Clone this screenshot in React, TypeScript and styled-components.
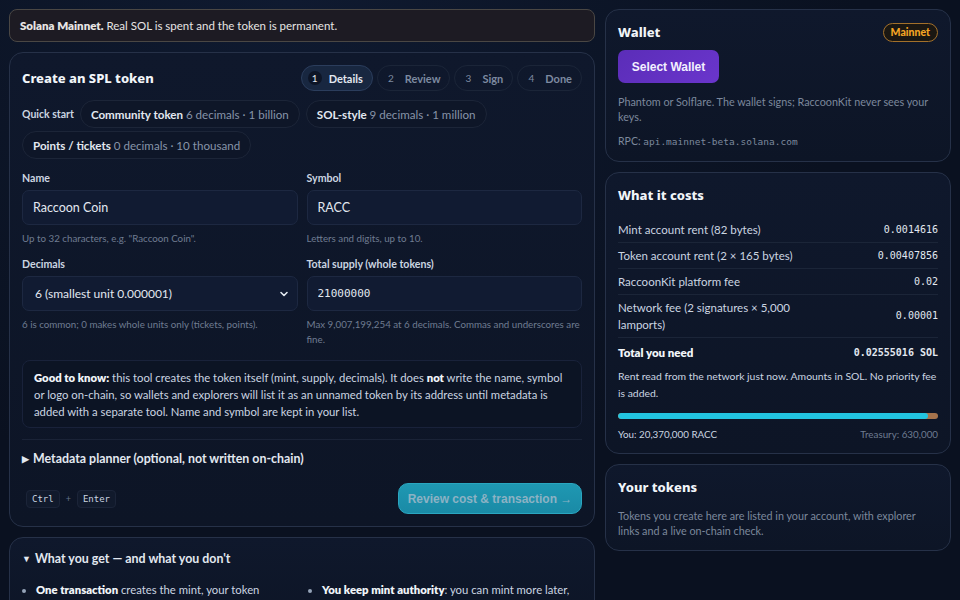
import React from 'react'
import styled, { createGlobalStyle } from 'styled-components'

const GlobalStyle = createGlobalStyle`
	html, body {
		margin: 0;
		padding: 0;
		background: #0a1120;
	}
	body {
		font-family: Lato, 'Noto Sans', sans-serif;
		color: #e2e8f0;
		background: radial-gradient(ellipse at 30% 0%, #0f1a30 0%, #0a1120 60%) fixed;
		min-height: 100vh;
	}
	* { box-sizing: border-box; }
`

const steps = [
	{ n: 1, label: 'Details' },
	{ n: 2, label: 'Review' },
	{ n: 3, label: 'Sign' },
	{ n: 4, label: 'Done' },
]

const presets = [
	{ name: 'Community token', detail: '6 decimals · 1 billion' },
	{ name: 'SOL-style', detail: '9 decimals · 1 million' },
	{ name: 'Points / tickets', detail: '0 decimals · 10 thousand' },
]

const costs = [
	{ label: 'Mint account rent (82 bytes)', value: '0.0014616' },
	{ label: 'Token account rent (2 × 165 bytes)', value: '0.00407856' },
	{ label: 'RaccoonKit platform fee', value: '0.02' },
	{ label: 'Network fee (2 signatures × 5,000 lamports)', value: '0.00001' },
]

const youShare = 20370000
const treasuryShare = 630000

const App: React.FC = () => {
	const pct = (youShare / (youShare + treasuryShare)) * 100
	return (
		<>
			<GlobalStyle />
			<Page>
				<MainCol>
					<Banner>
						<b>Solana Mainnet.</b> Real SOL is spent and the token is permanent.
					</Banner>

					<Card>
						<CardHead>
							<Title>Create an SPL token</Title>
							<Steps>
								{steps.map((s) => (
									<Step key={s.n} $active={s.n === 1}>
										<StepNum $active={s.n === 1}>{s.n}</StepNum>
										{s.label}
									</Step>
								))}
							</Steps>
						</CardHead>

						<Presets>
							<PresetLabel>Quick start</PresetLabel>
							{presets.map((p) => (
								<Preset key={p.name}>
									{p.name} <Muted>{p.detail}</Muted>
								</Preset>
							))}
						</Presets>

						<FormGrid>
							<Field>
								<Label>Name</Label>
								<Input defaultValue="Raccoon Coin" />
								<Hint>Up to 32 characters, e.g. "Raccoon Coin".</Hint>
							</Field>
							<Field>
								<Label>Symbol</Label>
								<Input defaultValue="RACC" />
								<Hint>Letters and digits, up to 10.</Hint>
							</Field>
							<Field>
								<Label>Decimals</Label>
								<SelectBox>
									6 (smallest unit 0.000001)
									<svg width="10" height="10" viewBox="0 0 10 10">
										<path d="M2 3.5 L5 6.5 L8 3.5" fill="none" stroke="#e2e8f0" strokeWidth="1.6" strokeLinecap="round" strokeLinejoin="round" />
									</svg>
								</SelectBox>
								<Hint>6 is common; 0 makes whole units only (tickets, points).</Hint>
							</Field>
							<Field>
								<Label>Total supply (whole tokens)</Label>
								<Input $mono defaultValue="21000000" />
								<Hint>Max 9,007,199,254 at 6 decimals. Commas and underscores are fine.</Hint>
							</Field>
						</FormGrid>

						<InfoBox>
							<b>Good to know:</b> this tool creates the token itself (mint, supply, decimals). It does <b>not</b> write
							the name, symbol or logo on-chain, so wallets and explorers will list it as an unnamed token by its
							address until metadata is added with a separate tool. Name and symbol are kept in your list.
						</InfoBox>

						<Disclosure>
							<Caret>▶</Caret> Metadata planner (optional, not written on-chain)
						</Disclosure>

						<Footer>
							<Keys>
								<Kbd>Ctrl</Kbd>
								<Plus>+</Plus>
								<Kbd>Enter</Kbd>
							</Keys>
							<PrimaryButton disabled>Review cost &amp; transaction →</PrimaryButton>
						</Footer>
					</Card>

					<Card>
						<SectionSummary>
							<Caret>▼</Caret> What you get — and what you don't
						</SectionSummary>
						<Bullets>
							<li>
								<b>One transaction</b> creates the mint, your token account and mints the full supply to
								your wallet.
							</li>
							<li>
								<b>You keep mint authority</b>: you can mint more later, or revoke it to fix the supply for
								good.
							</li>
						</Bullets>
					</Card>
				</MainCol>

				<SideCol>
					<SideCard>
						<SideHead>
							<Title>Wallet</Title>
							<Badge>Mainnet</Badge>
						</SideHead>
						<WalletButton>Select Wallet</WalletButton>
						<Note>Phantom or Solflare. The wallet signs; RaccoonKit never sees your keys.</Note>
						<Rpc>
							RPC: <code>api.mainnet-beta.solana.com</code>
						</Rpc>
					</SideCard>

					<SideCard>
						<Title>What it costs</Title>
						<CostList>
							{costs.map((c) => (
								<CostRow key={c.label}>
									<span>{c.label}</span>
									<Amount>{c.value}</Amount>
								</CostRow>
							))}
							<CostRow $total>
								<span>Total you need</span>
								<Amount $total>0.02555016 SOL</Amount>
							</CostRow>
						</CostList>
						<CostNote>Rent read from the network just now. Amounts in SOL. No priority fee is added.</CostNote>
						<Bar>
							<BarFill style={{ width: `${pct}%` }} />
						</Bar>
						<BarLegend>
							<span>You: 20,370,000 RACC</span>
							<LegendMuted>Treasury: 630,000</LegendMuted>
						</BarLegend>
					</SideCard>

					<SideCard>
						<Title>Your tokens</Title>
						<Note>
							Tokens you create here are listed in your account, with explorer links and a live on-chain
							check.
						</Note>
					</SideCard>
				</SideCol>
			</Page>
		</>
	)
}

const Page = styled.div`
	display: grid;
	grid-template-columns: 586px 346px;
	gap: 10px;
	padding: 9px;
	align-items: start;
`

const MainCol = styled.div`
	display: flex;
	flex-direction: column;
	gap: 10px;
`

const SideCol = styled(MainCol)``

const Banner = styled.div`
	background: #1d1b23;
	border: 1px solid #4a4744;
	border-radius: 8px;
	padding: 8px 10px;
	font-size: 11.5px;
	line-height: 15px;
	color: #e7e5e4;

	b {
		font-weight: 800;
	}
`

const Card = styled.section`
	background: linear-gradient(180deg, #0f182c 0%, #0d1526 100%);
	border: 1px solid #263148;
	border-radius: 14px;
	padding: 12px;
`

const SideCard = styled(Card)`
	padding-top: 13px;
`

const CardHead = styled.div`
	display: flex;
	align-items: center;
	justify-content: space-between;
`

const Title = styled.h2`
	margin: 0;
	font-family: 'Noto Sans', sans-serif;
	font-size: 13px;
	font-weight: 800;
	color: #f1f5f9;
	line-height: 19px;
`

const Steps = styled.div`
	display: flex;
	gap: 4px;
`

const Step = styled.div<{ $active?: boolean }>`
	display: flex;
	align-items: center;
	gap: 7px;
	height: 26px;
	padding: 0 9px 0 6px;
	border-radius: 13px;
	font-size: 11px;
	font-weight: 700;
	color: ${(p) => (p.$active ? '#e2e8f0' : '#7d8aa0')};
	background: ${(p) => (p.$active ? '#182740' : 'transparent')};
	border: 1px solid ${(p) => (p.$active ? '#2b3d5c' : '#1b2538')};
`

const StepNum = styled.span<{ $active?: boolean }>`
	width: 14px;
	height: 14px;
	border-radius: 50%;
	display: grid;
	place-items: center;
	font-size: 10px;
	font-weight: 400;
	color: ${(p) => (p.$active ? '#e2e8f0' : '#7d8aa0')};
	background: ${(p) => (p.$active ? '#0d1526' : 'transparent')};
`

const Presets = styled.div`
	display: flex;
	flex-wrap: wrap;
	align-items: center;
	gap: 3px 6px;
	margin-top: 9px;
`

const PresetLabel = styled.span`
	font-size: 10.5px;
	font-weight: 700;
	color: #cbd5e1;
`

const Preset = styled.button`
	height: 28px;
	padding: 0 10px;
	border-radius: 14px;
	border: 1px solid #1c2538;
	background: #0e1628;
	color: #e2e8f0;
	font-family: inherit;
	font-size: 11.6px;
	font-weight: 700;
	cursor: pointer;
`

const Muted = styled.span`
	font-weight: 400;
	color: #8794a8;
`

const FormGrid = styled.div`
	display: grid;
	grid-template-columns: 1fr 1fr;
	gap: 11px 9px;
	margin-top: 12px;
`

const Field = styled.div`
	display: flex;
	flex-direction: column;
`

const Label = styled.label`
	font-size: 10.6px;
	font-weight: 700;
	color: #cbd5e1;
	line-height: 14px;
	margin-bottom: 5px;
`

const Input = styled.input<{ $mono?: boolean }>`
	height: 35px;
	padding: 0 10px;
	border-radius: 7px;
	border: 1px solid #1d2841;
	background: #111b32;
	color: #e2e8f0;
	font-family: ${(p) => (p.$mono ? "'DejaVu Sans Mono', monospace" : 'inherit')};
	font-size: ${(p) => (p.$mono ? '11px' : '12.5px')};
	outline: none;
`

const SelectBox = styled.div`
	height: 35px;
	padding: 0 8px 0 12px;
	border-radius: 7px;
	border: 1px solid #1d2841;
	background: #111b32;
	color: #e2e8f0;
	font-size: 12px;
	display: flex;
	align-items: center;
	justify-content: space-between;
`

const Hint = styled.p`
	margin: 6px 0 0;
	font-size: 9.75px;
	line-height: 15px;
	color: #6f7c91;
`

const InfoBox = styled.div`
	margin-top: 13px;
	padding: 7.5px 11px;
	border: 1px solid #19223a;
	border-radius: 8px;
	background: #0c1424;
	font-size: 11.3px;
	line-height: 17px;
	color: #cbd5e1;

	b {
		color: #f1f5f9;
		font-weight: 800;
	}
`

const Disclosure = styled.div`
	margin-top: 11px;
	padding-top: 11px;
	border-top: 1px solid #1a2337;
	font-size: 12.4px;
	font-weight: 700;
	color: #e2e8f0;
	line-height: 16px;
	display: flex;
	align-items: center;
	gap: 4px;
`

const Caret = styled.span`
	font-size: 9px;
	color: #e2e8f0;
`

const Footer = styled.div`
	display: flex;
	align-items: center;
	justify-content: space-between;
	margin-top: 16px;
`

const Keys = styled.div`
	display: flex;
	align-items: center;
	gap: 6px;
	padding-left: 4px;
`

const Kbd = styled.kbd`
	font-family: 'DejaVu Sans Mono', monospace;
	font-size: 9px;
	color: #cbd5e1;
	background: #111a2c;
	border: 1px solid #1b2438;
	border-radius: 4px;
	padding: 3px 5px;
`

const Plus = styled.span`
	font-size: 9px;
	color: #64748b;
`

const PrimaryButton = styled.button`
	width: 184px;
	height: 31px;
	border: 1px solid #2aa6c0;
	border-radius: 10px;
	background: linear-gradient(180deg, #1f98b2 0%, #1a8aa6 100%);
	color: #8cb2c4;
	font-family: 'Liberation Sans', Arial, sans-serif;
	font-size: 12px;
	font-weight: 700;
`

const SectionSummary = styled(Disclosure)`
	margin-top: 0;
	padding-top: 1px;
	border-top: none;
`

const Bullets = styled.ul`
	margin: 14px 0 0;
	padding: 0 0 0 14px;
	display: grid;
	grid-template-columns: 260px 260px;
	column-gap: 26px;
	font-size: 11.3px;
	line-height: 17px;
	color: #cbd5e1;

	li::marker {
		color: #94a3b8;
	}
	b {
		color: #f1f5f9;
		font-weight: 800;
	}
`

const SideHead = styled.div`
	display: flex;
	align-items: center;
	justify-content: space-between;
`

const Badge = styled.span`
	font-size: 10.5px;
	font-weight: 900;
	color: #f5a524;
	border: 1px solid #a3702a;
	background: #1a1712;
	border-radius: 10px;
	padding: 1px 7px;
	line-height: 15px;
`

const WalletButton = styled.button`
	margin-top: 8px;
	height: 33px;
	width: 101px;
	border: none;
	border-radius: 7px;
	background: linear-gradient(135deg, #5b2db8 0%, #6a35cc 100%);
	color: #f3f0ff;
	font-family: 'Liberation Sans', Arial, sans-serif;
	font-size: 12px;
	font-weight: 700;
`

const Note = styled.p`
	margin: 10.5px 0 0;
	font-size: 10.8px;
	line-height: 15px;
	color: #7c889c;
`

const Rpc = styled(Note)`
	margin-top: 10px;
	font-size: 10.5px;

	code {
		font-family: 'DejaVu Sans Mono', monospace;
		font-size: 9.5px;
		line-height: 1;
	}
`

const CostList = styled.div`
	margin-top: 12px;
	display: flex;
	flex-direction: column;
`

const CostRow = styled.div<{ $total?: boolean }>`
	display: flex;
	align-items: center;
	justify-content: space-between;
	gap: 24px;
	padding: ${(p) => (p.$total ? '6.5px 0 7px' : '4px 0')};
	border-bottom: ${(p) => (p.$total ? 'none' : '1px solid #1b2538')};
	font-size: 11.5px;
	line-height: 17px;
	color: ${(p) => (p.$total ? '#f1f5f9' : '#cbd5e1')};
	font-weight: ${(p) => (p.$total ? 800 : 400)};

	span:first-child {
		max-width: 200px;
	}
`

const Amount = styled.span<{ $total?: boolean }>`
	font-family: 'DejaVu Sans Mono', monospace;
	font-size: 10px;
	line-height: 17px;
	font-weight: ${(p) => (p.$total ? 700 : 400)};
	color: #e2e8f0;
	white-space: nowrap;
`

const CostNote = styled.p`
	margin: 0;
	font-size: 10.4px;
	line-height: 17px;
	color: #cbd5e1;
`

const Bar = styled.div`
	margin-top: 11px;
	height: 6px;
	border-radius: 3px;
	background: #a5734c;
	overflow: hidden;
`

const BarFill = styled.div`
	height: 100%;
	background: #22c4e0;
	border-radius: 3px;
`

const BarLegend = styled.div`
	display: flex;
	justify-content: space-between;
	margin-top: 8px;
	font-size: 9.8px;
	line-height: 14px;
	color: #cbd5e1;
`

const LegendMuted = styled.span`
	color: #6f7c91;
`

export default App
